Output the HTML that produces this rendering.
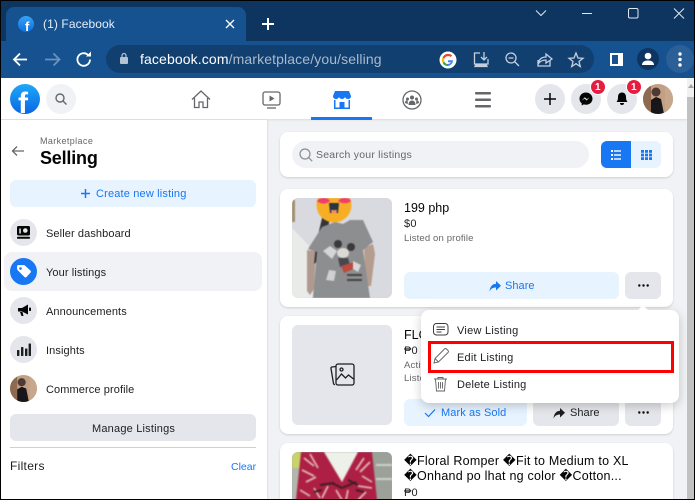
<!DOCTYPE html>
<html><head><meta charset="utf-8">
<style>
html,body{margin:0;padding:0}
body{width:695px;height:500px;overflow:hidden;position:relative;background:#000;font-family:"Liberation Sans",sans-serif;color:#1c1e21}
div,svg,span{position:absolute}
.t{white-space:nowrap;line-height:1}
.c{border-radius:50%}
.card{background:#fff;border-radius:8px;left:280px;width:393px;box-shadow:0 1px 2px rgba(0,0,0,.15)}
.m{font-size:11px;letter-spacing:.1px;color:#1c1e21;left:46px}
.b{border-radius:6px}
</style></head><body>
<div id="w" style="left:1px;top:1px;width:693px;height:498px;overflow:hidden;background:#0e3560">
<div style="left:-1px;top:-1px;width:695px;height:500px">

<!-- tab strip -->
<div style="left:6px;top:7px;width:240px;height:34px;background:#15528f;border-radius:8px 8px 0 0"></div>
<div class="c" style="left:18px;top:16px;width:16px;height:16px;background:linear-gradient(#36a3f5,#0d6fe0)"></div>
<div class="t" style="left:25px;top:19px;font:bold 13px 'Liberation Sans';color:#fff">f</div>
<div class="t" style="left:43px;top:18px;font-size:12px;letter-spacing:.1px;color:#e8eef5">(1) Facebook</div>
<svg style="left:224px;top:18px" width="12" height="12"><path d="M2 2l8 8M10 2l-8 8" stroke="#fff" stroke-width="1.400"/></svg>
<svg style="left:261px;top:17px" width="14" height="14"><path d="M7 1v12M1 7h12" stroke="#fff" stroke-width="2"/></svg>
<svg style="left:530px;top:0" width="160" height="24" fill="none" stroke="#dfe7ef" stroke-width="1"><path d="M6 10.500l5 5 5-5"/><path d="M52 13.500h10"/><rect x="98.500" y="8.500" width="9.500" height="9.500" rx="1.500"/><path d="M144 8.500l10 10M154 8.500l-10 10"/></svg>

<!-- toolbar -->
<div style="left:0;top:41px;width:695px;height:37px;background:#15528f"></div>
<svg style="left:0;top:41px" width="100" height="36" fill="none" stroke-width="1.800"><path d="M27 18.500H14.500M20 12.500l-6 6 6 6" stroke="#fff"/><path d="M45 18.500h14M53.500 12.500l6 6-6 6" stroke="#6f92b8"/><path d="M90 18.500a6.300 6.300 0 1 1-2-4.600" stroke="#fff"/><path d="M91 10.500v5h-5z" fill="#fff"/></svg>
<div style="left:106px;top:45px;width:488px;height:28px;background:#113f70;border-radius:14px"></div>
<svg style="left:119px;top:52px" width="10" height="13"><rect x="1" y="5" width="8" height="7" rx="1" fill="#b5c3d3"/><path d="M3 5V3.500a2 2 0 0 1 4 0V5" fill="none" stroke="#b5c3d3" stroke-width="1.200"/></svg>
<div class="t" style="left:140px;top:52px;font-size:14px;letter-spacing:.12px;color:#fff">facebook.com<span style="position:static;color:#a9bacd">/marketplace/you/selling</span></div>
<svg style="left:439px;top:51px" width="18" height="18" viewBox="0 0 18 18"><circle cx="9" cy="9" r="8.500" fill="#fff"/><path d="M14 9.200H9v2h2.800a3.200 3.200 0 0 1-2.800 1.700V15a5.800 5.800 0 0 0 5-5.800z" fill="#4285f4"/><path d="M9 13a4 4 0 0 1-3.700-2.500L3.600 12A6 6 0 0 0 9 15z" fill="#34a853"/><path d="M5.300 10.500a4 4 0 0 1 0-2.800L3.600 6.200a6 6 0 0 0 0 5.700z" fill="#fbbc05"/><path d="M5.300 7.700A4 4 0 0 1 11.600 6l1.500-1.500A6 6 0 0 0 3.600 6.200z" fill="#ea4335"/></svg>
<svg style="left:472px;top:51px" width="114" height="18" fill="none" stroke="#c4d0dd" stroke-width="1.300"><path d="M8 2H2.500v11H16V8"/><path d="M4 13l-1 2.500h12l-1-2.500" fill="#c4d0dd"/><path d="M12 1v7M9 6l3 3 3-3"/><circle cx="39" cy="7" r="5"/><path d="M36.500 7h5M43 11l4 4"/><path d="M66 9v6h12v-5M66 13c1-5 4-7 8-7V3l6 5-6 4V9c-3 0-6 1-8 4z"/><path d="M104 2l2 5 5 .3-4 3.200 1.300 5-4.300-2.800-4.300 2.800 1.300-5-4-3.200 5-.3z"/></svg>
<svg style="left:609px;top:52px" width="15" height="15"><rect x="1" y="1" width="13" height="13" fill="#fff"/><rect x="3" y="3" width="6" height="9" fill="#15528f"/></svg>
<div class="c" style="left:637px;top:48px;width:22px;height:22px;background:#0e3560"></div>
<svg style="left:640px;top:52px" width="16" height="14"><circle cx="8" cy="4" r="3.300" fill="#fff"/><path d="M2 13c0-3 2.500-4.500 6-4.500s6 1.500 6 4.500z" fill="#fff"/></svg>
<div class="c" style="left:666px;top:45px;width:28px;height:28px;background:#2a5f97"></div>
<svg style="left:678px;top:52px" width="4" height="15" fill="#fff"><circle cx="2" cy="2" r="1.700"/><circle cx="2" cy="7.500" r="1.700"/><circle cx="2" cy="13" r="1.700"/></svg>

<!-- page -->
<div style="left:0;top:78px;width:695px;height:422px;background:#f0f2f5"></div>
<div style="left:0;top:78px;width:687px;height:41px;background:#fff;box-shadow:0 1px 2px rgba(0,0,0,.1)"></div>
<div style="left:0;top:120px;width:267px;height:380px;background:#fff;box-shadow:1px 0 1px rgba(0,0,0,.08)"></div>
<!-- scrollbar -->
<div style="left:687px;top:78px;width:8px;height:422px;background:#f1f1f1"></div>
<div style="left:687px;top:97px;width:8px;height:403px;background:#c1c1c1"></div>
<svg style="left:687px;top:83px" width="8" height="6"><path d="M4 1l3 4H1z" fill="#a3a3a3"/></svg>

<!-- fb header -->
<div class="c" style="left:10px;top:84px;width:30px;height:30px;background:linear-gradient(#1fa8f8,#0a66e4);overflow:hidden"></div>
<div class="t" style="left:18px;top:87px;font:bold 30px 'Liberation Sans';color:#fff">f</div>
<div class="c" style="left:46px;top:84px;width:30px;height:30px;background:#f0f2f5"></div>
<svg style="left:54px;top:92px" width="14" height="14" fill="none" stroke="#65676b" stroke-width="1.400"><circle cx="6" cy="6" r="4"/><path d="M9 9l3.500 3.500"/></svg>
<svg style="left:191px;top:90px" width="20" height="19" fill="none" stroke="#65676b" stroke-width="1.300"><path d="M1 9.500L10 1l9 8.500"/><path d="M3.500 8v9.500h4.500V12h4v5.500h4.500V8"/></svg>
<svg style="left:262px;top:91px" width="20" height="18" fill="none" stroke="#65676b" stroke-width="1.300"><rect x="1" y="1" width="17" height="13" rx="2"/><path d="M7.500 4.500v6l5-3z" fill="#65676b" stroke="none"/><path d="M5 17h9"/></svg>
<svg style="left:332px;top:90px" width="20" height="19" fill="#1877f2"><path d="M3 1h14l2 5c0 1.800-1 3-3 3-1.500 0-2.500-.7-3-2-.5 1.300-1.700 2-3 2s-2.500-.7-3-2c-.5 1.300-1.500 2-3 2-2 0-3-1.200-3-3z"/><path d="M2 10h1.500v7.500h4V12h5v5.500h4V10H18v9H2z"/></svg>
<div style="left:311px;top:117px;width:61px;height:2.500px;background:#1877f2"></div>
<svg style="left:402px;top:90px" width="20" height="20" fill="#65676b"><circle cx="10" cy="10" r="9" fill="none" stroke="#65676b" stroke-width="1.300"/><circle cx="10" cy="7.500" r="2"/><circle cx="5.500" cy="9" r="1.500"/><circle cx="14.500" cy="9" r="1.500"/><path d="M6.500 15c0-3 1.500-4.500 3.500-4.500s3.500 1.500 3.500 4.500z"/><path d="M3 13c0-2 1-2.700 2.500-2.700l.5 3.700zM17 13c0-2-1-2.700-2.500-2.700l-.5 3.700z"/></svg>
<svg style="left:474px;top:91px" width="18" height="18" fill="#65676b"><rect x="1" y="1" width="16" height="2.500" rx="1"/><rect x="1" y="7.500" width="16" height="2.500" rx="1"/><rect x="1" y="14" width="16" height="2.500" rx="1"/></svg>
<div class="c" style="left:535px;top:84px;width:30px;height:30px;background:#e4e6eb"></div>
<svg style="left:544px;top:93px" width="12" height="12"><path d="M6 0v12M0 6h12" stroke="#050505" stroke-width="1.500"/></svg>
<div class="c" style="left:571px;top:84px;width:30px;height:30px;background:#e4e6eb"></div>
<svg style="left:579px;top:92px" width="14" height="14"><path d="M7 0.500C3.300.5.500 3.200.500 6.700c0 1.900.8 3.500 2.200 4.600v2.200l2.100-1.100c.7.200 1.400.3 2.200.3 3.700 0 6.500-2.700 6.500-6S10.700.5 7 .5z" fill="#050505"/><path d="M2.800 8.500l3-3.300 2 1.900 2.800-1.900-3 3.300-2-1.900z" fill="#e4e6eb"/></svg>
<div class="c" style="left:607px;top:84px;width:30px;height:30px;background:#e4e6eb"></div>
<svg style="left:616px;top:92px" width="12" height="14" fill="#050505"><path d="M6 .5C3.300.5 2 2.500 2 5c0 2.500-.5 3.600-1.500 5h11C10.500 8.600 10 7.500 10 5c0-2.500-1.300-4.500-4-4.500z"/><path d="M4 11h4a2 2 0 0 1-4 0z"/></svg>
<div class="c" style="left:591px;top:80px;width:14px;height:14px;background:#e41e3f;box-shadow:0 0 0 1px #fff"></div>
<div class="t" style="left:595px;top:82px;font:bold 10px 'Liberation Sans';color:#fff">1</div>
<div class="c" style="left:627px;top:80px;width:14px;height:14px;background:#e41e3f;box-shadow:0 0 0 1px #fff"></div>
<div class="t" style="left:631px;top:82px;font:bold 10px 'Liberation Sans';color:#fff">1</div>
<svg style="left:643px;top:84px" width="30" height="30" viewBox="0 0 30 30"><defs><clipPath id="av"><circle cx="15" cy="15" r="15"/></clipPath></defs><g clip-path="url(#av)"><rect width="30" height="30" fill="#c3a083"/><rect x="0" width="8" height="30" fill="#8e6b50"/><rect x="22" width="8" height="30" fill="#c7a88c"/><circle cx="13" cy="8" r="4.500" fill="#4d3a35"/><path d="M8 30V16l5-3 5 2 3 15z" fill="#17161a"/></g></svg>

<!-- sidebar -->
<svg style="left:11px;top:145px" width="14" height="12" fill="none" stroke="#65676b" stroke-width="1.300"><path d="M13 6H1.500M6 1.500L1.500 6 6 10.500"/></svg>
<div class="t" style="left:40px;top:137px;font-size:9px;letter-spacing:.38px;color:#65676b">Marketplace</div>
<div class="t" style="left:40px;top:148px;font:bold 18px 'Liberation Sans';letter-spacing:-.2px;color:#050505">Selling</div>
<div class="b" style="left:10px;top:180px;width:246px;height:27px;background:#e7f3ff"></div>
<svg style="left:81px;top:189px" width="9" height="9"><path d="M4.500 0v9M0 4.500h9" stroke="#1877f2" stroke-width="1.500"/></svg>
<div class="t" style="left:96px;top:189px;font-size:11px;letter-spacing:.17px;color:#1877f2">Create new listing</div>

<div class="c" style="left:10px;top:219px;width:27px;height:27px;background:#e4e6eb"></div>
<svg style="left:17px;top:226px" width="13" height="13"><rect width="13" height="9.500" rx="1.500" fill="#050505"/><rect y="10.800" width="13" height="2" rx=".8" fill="#050505"/><circle cx="8.300" cy="4.500" r="2.300" fill="#e4e6eb"/><rect x="2.300" y="2.500" width="1.500" height="5" fill="#e4e6eb"/></svg>
<div class="t m" style="top:229px">Seller dashboard</div>

<div style="left:4px;top:252px;width:258px;height:39px;background:#f0f2f5;border-radius:8px"></div>
<div class="c" style="left:10px;top:258px;width:27px;height:27px;background:#1877f2"></div>
<svg style="left:16px;top:264px" width="16" height="15" fill="#fff"><path d="M1 2.500c0-1 .8-1.500 1.500-1.500h5c.6 0 1 .2 1.500.6l5.500 5c.6.6.6 1.400 0 2L10.500 13c-.6.600-1.500.6-2 0L2 6.500C1.300 5.800 1 5 1 4.500z"/><circle cx="4.500" cy="4.500" r="1.300" fill="#1877f2"/></svg>
<div class="t m" style="top:268px">Your listings</div>

<div class="c" style="left:10px;top:297px;width:27px;height:27px;background:#e4e6eb"></div>
<svg style="left:17px;top:304px" width="14" height="14" fill="#050505"><path d="M1 4h4l6-3.500v10L5 7.500H1z"/><path d="M3 8h2.500l1 4H4.500z"/><rect x="12" y="3.500" width="2" height="3.500" rx=".8"/></svg>
<div class="t m" style="top:307px">Announcements</div>

<div class="c" style="left:10px;top:336px;width:27px;height:27px;background:#e4e6eb"></div>
<svg style="left:17px;top:342px" width="14" height="15" fill="#1c1e21"><rect x="0" y="8" width="2.400" height="6" rx=".6"/><rect x="4" y="5" width="2.400" height="9" rx=".6"/><rect x="8" y="6.500" width="2.400" height="7.500" rx=".6"/><rect x="11.600" y="1.500" width="2.400" height="12.500" rx=".6"/></svg>
<div class="t m" style="top:346px">Insights</div>

<svg style="left:10px;top:375px" width="27" height="27" viewBox="0 0 30 30"><defs><clipPath id="av2"><circle cx="15" cy="15" r="15"/></clipPath></defs><g clip-path="url(#av2)"><rect width="30" height="30" fill="#c3a083"/><rect x="0" width="8" height="30" fill="#8e6b50"/><rect x="22" width="8" height="30" fill="#c7a88c"/><circle cx="13" cy="8" r="4.500" fill="#4d3a35"/><path d="M8 30V16l5-3 5 2 3 15z" fill="#17161a"/></g></svg>
<div class="t m" style="top:385px">Commerce profile</div>

<div class="b" style="left:10px;top:414px;width:246px;height:27px;background:#e4e6eb"></div>
<div class="t" style="left:92px;top:424px;font-size:11px;letter-spacing:.2px;color:#1c1e21">Manage Listings</div>
<div style="left:10px;top:447px;width:246px;height:1px;background:#ced0d4"></div>
<div class="t" style="left:10px;top:460px;font-size:12px;letter-spacing:.3px;color:#1c1e21">Filters</div>
<div class="t" style="left:231px;top:462px;font-size:10.500px;letter-spacing:0;color:#1877f2">Clear</div>

<!-- search card -->
<div class="card" style="top:132px;height:45px"></div>
<div style="left:292px;top:141px;width:297px;height:27px;background:#f0f2f5;border-radius:14px"></div>
<svg style="left:299px;top:148px" width="14" height="14" fill="none" stroke="#8a8d91" stroke-width="1.200"><circle cx="6" cy="6" r="5"/><path d="M9.700 9.700l3.500 3.500"/></svg>
<div class="t" style="left:316px;top:150px;font-size:10.500px;letter-spacing:.22px;color:#65676b">Search your listings</div>
<div style="left:601px;top:141px;width:30px;height:27px;background:#1877f2;border-radius:6px 0 0 6px"></div>
<div style="left:631px;top:141px;width:30px;height:27px;background:#e7f3ff;border-radius:0 6px 6px 0"></div>
<svg style="left:611px;top:150px" width="10" height="10" fill="#fff"><rect x="0" y="0" width="2" height="2"/><rect x="0" y="4" width="2" height="2"/><rect x="0" y="8" width="2" height="2"/><rect x="3" y=".3" width="7" height="1.400"/><rect x="3" y="4.300" width="7" height="1.400"/><rect x="3" y="8.300" width="7" height="1.400"/></svg>
<svg style="left:641px;top:150px" width="11" height="10" fill="#1877f2"><rect x="0" y="0" width="3" height="2.800"/><rect x="4" y="0" width="3" height="2.800"/><rect x="8" y="0" width="3" height="2.800"/><rect x="0" y="3.600" width="3" height="2.800"/><rect x="4" y="3.600" width="3" height="2.800"/><rect x="8" y="3.600" width="3" height="2.800"/><rect x="0" y="7.200" width="3" height="2.800"/><rect x="4" y="7.200" width="3" height="2.800"/><rect x="8" y="7.200" width="3" height="2.800"/></svg>

<!-- listing 1 -->
<div class="card" style="top:189px;height:118px"></div>
<div style="left:292px;top:198px;width:100px;height:100px;border-radius:6px;overflow:hidden;background:#d9dadf">
<svg style="left:0;top:0;filter:blur(.6px)" width="100" height="100" viewBox="0 0 100 100">
<rect width="100" height="100" fill="#d9dadf"/>
<path d="M0 30L24 55 20 100H0z" fill="#e9ebe8"/>
<rect x="0" y="2" width="3" height="22" fill="#a58f6d"/>
<path d="M72 50l9-4 2 10-4 32-5 0z" fill="#b49c8e"/>
<path d="M15 52l9 1-2 38-4 6-3-4z" fill="#b09a90"/>
<path d="M30 20c6-4 9 2 6 8L27 62l-5 4 2-20z" fill="#37333a"/>
<path d="M16 51l14-22 13-5 8 2 7-4 13 0 10 22-10 8 7 48H21l4-46z" fill="#8d8e90"/>
<path d="M38 48l-7 5 9 8 5-8z" fill="#d5d5d7"/>
<circle cx="46" cy="46" r="4" fill="#3a3a3c"/><circle cx="59" cy="49" r="4" fill="#3a3a3c"/>
<ellipse cx="51" cy="55" rx="6" ry="5" fill="#dcd8d3"/>
<path d="M46 60h10l2 7-10 2z" fill="#48484c"/>
<path d="M49 68l13-4 4 5-14 6z" fill="#bd4a3f"/>
<path d="M37 72l7 1-2 10-8-1z" fill="#d0d0d2"/><path d="M61 63l8 4-3 7-5-3z" fill="#d8d8da"/>
<rect x="55" y="76" width="15" height="2" fill="#444"/><rect x="55" y="81" width="15" height="2" fill="#444"/>
<circle cx="42" cy="7" r="17.500" fill="#f7ae24"/>
<path d="M25 3c3-4 11-4 13 0-3 3-9 4-13 0zM46 3c3-4 11-4 13 0-3 3-9 3-13 0z" fill="#ef3d6e"/>
<path d="M37 5h10l-1 10h-8z" fill="#2a3443"/><path d="M39 12h6l-.5 3h-5z" fill="#ed8a6d"/>
</svg></div>
<div class="t" style="left:404px;top:202px;font-size:12.500px;letter-spacing:0;color:#050505">199 php</div>
<div class="t" style="left:404px;top:219px;font-size:11px;letter-spacing:.2px;color:#1c1e21">$0</div>
<div class="t" style="left:404px;top:234px;font-size:9.500px;letter-spacing:.15px;color:#65676b">Listed on profile</div>
<div class="b" style="left:404px;top:272px;width:215px;height:27px;background:#e7f3ff"></div>
<svg style="left:489px;top:280px" width="12" height="12"><path d="M7 1l5 4.700L7 10.500V7.500C4 7.500 2 8.500.5 11.500 1 7 3 4 7 3.800z" fill="#1877f2"/></svg>
<div class="t" style="left:505px;top:281px;font-size:11px;letter-spacing:.05px;color:#1877f2">Share</div>
<div class="b" style="left:625px;top:272px;width:36px;height:27px;background:#e4e6eb"></div>
<svg style="left:638px;top:284px" width="11" height="3" fill="#050505"><circle cx="1.300" cy="1.500" r="1.200"/><circle cx="5.500" cy="1.500" r="1.200"/><circle cx="9.700" cy="1.500" r="1.200"/></svg>

<!-- listing 2 -->
<div class="card" style="top:316px;height:118px"></div>
<div class="b" style="left:292px;top:325px;width:100px;height:100px;background:#e4e6eb"></div>
<svg style="left:330px;top:363px" width="25" height="25" fill="none" stroke="#1c1e21" stroke-width="1.300"><rect x="6" y="1" width="18" height="21" rx="2"/><path d="M6 3.500L2 4c-.8.100-1.200.7-1 1.500l2.500 15c.2.800.8 1.200 1.500 1"/><path d="M6.500 17l5-6 4 4 3-3 5 4"/><circle cx="11.500" cy="6.500" r="1.500"/></svg>
<div class="t" style="left:404px;top:329px;font-size:12.500px;letter-spacing:0;color:#050505">FLORAL</div>
<div class="t" style="left:404px;top:346px;font-size:11px;letter-spacing:.2px;color:#1c1e21">₱0</div>
<div class="t" style="left:404px;top:361px;font-size:9.500px;letter-spacing:.2px;color:#65676b">Active</div>
<div class="t" style="left:404px;top:374px;font-size:9.500px;letter-spacing:.2px;color:#65676b">Listed</div>
<div class="b" style="left:404px;top:399px;width:123px;height:27px;background:#e7f3ff"></div>
<svg style="left:424px;top:408px" width="12" height="10" fill="none" stroke="#1877f2" stroke-width="1.200"><path d="M1 5l3.500 3.500L11 1.500"/></svg>
<div class="t" style="left:441px;top:408px;font-size:11px;letter-spacing:.1px;color:#1877f2">Mark as Sold</div>
<div class="b" style="left:533px;top:399px;width:86px;height:27px;background:#e4e6eb"></div>
<svg style="left:553px;top:407px" width="12" height="12"><path d="M7 1l5 4.700L7 10.500V7.500C4 7.500 2 8.500.5 11.500 1 7 3 4 7 3.800z" fill="#1c1e21"/></svg>
<div class="t" style="left:570px;top:408px;font-size:11px;letter-spacing:.05px;color:#1c1e21">Share</div>
<div class="b" style="left:625px;top:399px;width:36px;height:27px;background:#e4e6eb"></div>
<svg style="left:638px;top:411px" width="11" height="3" fill="#050505"><circle cx="1.300" cy="1.500" r="1.200"/><circle cx="5.500" cy="1.500" r="1.200"/><circle cx="9.700" cy="1.500" r="1.200"/></svg>

<!-- listing 3 -->
<div class="card" style="top:443px;height:70px"></div>
<div style="left:292px;top:452px;width:100px;height:48px;border-radius:6px 6px 0 0;overflow:hidden;background:#a9ada5">
<svg style="left:0;top:0;filter:blur(.7px)" width="100" height="48" viewBox="0 0 100 48">
<rect width="100" height="48" fill="#b2b6ad"/><rect x="80" y="0" width="20" height="48" fill="#9ba199"/><rect x="84" y="12" width="16" height="2" fill="#cfd3cc"/><rect x="84" y="26" width="16" height="2" fill="#cfd3cc"/><rect x="0" width="9" height="16" fill="#c8d36c"/>
<path d="M9 0h23l18 30L66 0h14l5 48H4z" fill="#ad1f44"/>
<path d="M32 0h34L50 30z" fill="#eef0ea"/>
<g stroke="#e8c8bf" stroke-width="1.600" fill="none"><path d="M12 6l10 8M18 2l8 14M10 18l12 6M14 30l10-5M8 38l10 6M22 36l6 10M36 34l-6 12M72 6l-8 12M78 10l-10 10M70 24l10 6M66 34l14 2M74 40l-8 8M44 38l6 10M56 38l-2 10"/></g>
<g stroke="#3a1e22" stroke-width="2" fill="none"><path d="M28 33l14-2M40 31l10 5M50 36l14-6M56 28l10 5M22 40l8-2M64 38l8 2"/></g>
</svg></div>
<div class="t" style="left:404px;top:455px;font-size:12.500px;letter-spacing:.23px;color:#050505">�Floral Romper �Fit to Medium to XL</div>
<div class="t" style="left:404px;top:470px;font-size:12.500px;letter-spacing:.23px;color:#050505">�Onhand po lhat ng color �Cotton...</div>
<div class="t" style="left:404px;top:488px;font-size:11px;letter-spacing:.2px;color:#1c1e21">₱0</div>

<!-- popup -->
<div style="left:421px;top:310px;width:258px;height:93px;background:#fff;border-radius:8px;box-shadow:0 3px 10px rgba(0,0,0,.2)"></div>
<svg style="left:636px;top:304px" width="14" height="7"><path d="M1 7l6-6 6 6z" fill="#fff"/></svg>
<svg style="left:433px;top:323px" width="16" height="13" fill="none" stroke="#3a3b3c" stroke-width="1"><rect x=".5" y=".5" width="14.500" height="11.500" rx="3"/><path d="M3.500 4h8.500M3.500 6.500h8.500M3.500 9h5"/></svg>
<div class="t" style="left:457px;top:326px;font-size:11px;letter-spacing:.25px;color:#1c1e21">View Listing</div>
<svg style="left:433px;top:348px" width="16" height="16" fill="none" stroke="#606164" stroke-width=".9"><path d="M1 15l1-4.500L11.500 1c.6-.6 1.400-.6 2 0l1.500 1.500c.6.6.6 1.400 0 2L5.500 14z"/><path d="M2 10.500l3.500 3.500"/></svg>
<div class="t" style="left:457px;top:353px;font-size:11px;letter-spacing:.22px;color:#1c1e21">Edit Listing</div>
<svg style="left:433px;top:376px" width="15" height="16" fill="none" stroke="#606164" stroke-width=".9"><path d="M1 3h13M5 3V1.500h5V3"/><path d="M2.500 3l1 12h8l1-12"/><path d="M5.500 6v6.500M7.500 6v6.500M9.500 6v6.500"/></svg>
<div class="t" style="left:457px;top:380px;font-size:11px;letter-spacing:.2px;color:#1c1e21">Delete Listing</div>
<div style="left:428px;top:341px;width:240px;height:26px;border:3px solid #f00"></div>

</div></div>
</body></html>
